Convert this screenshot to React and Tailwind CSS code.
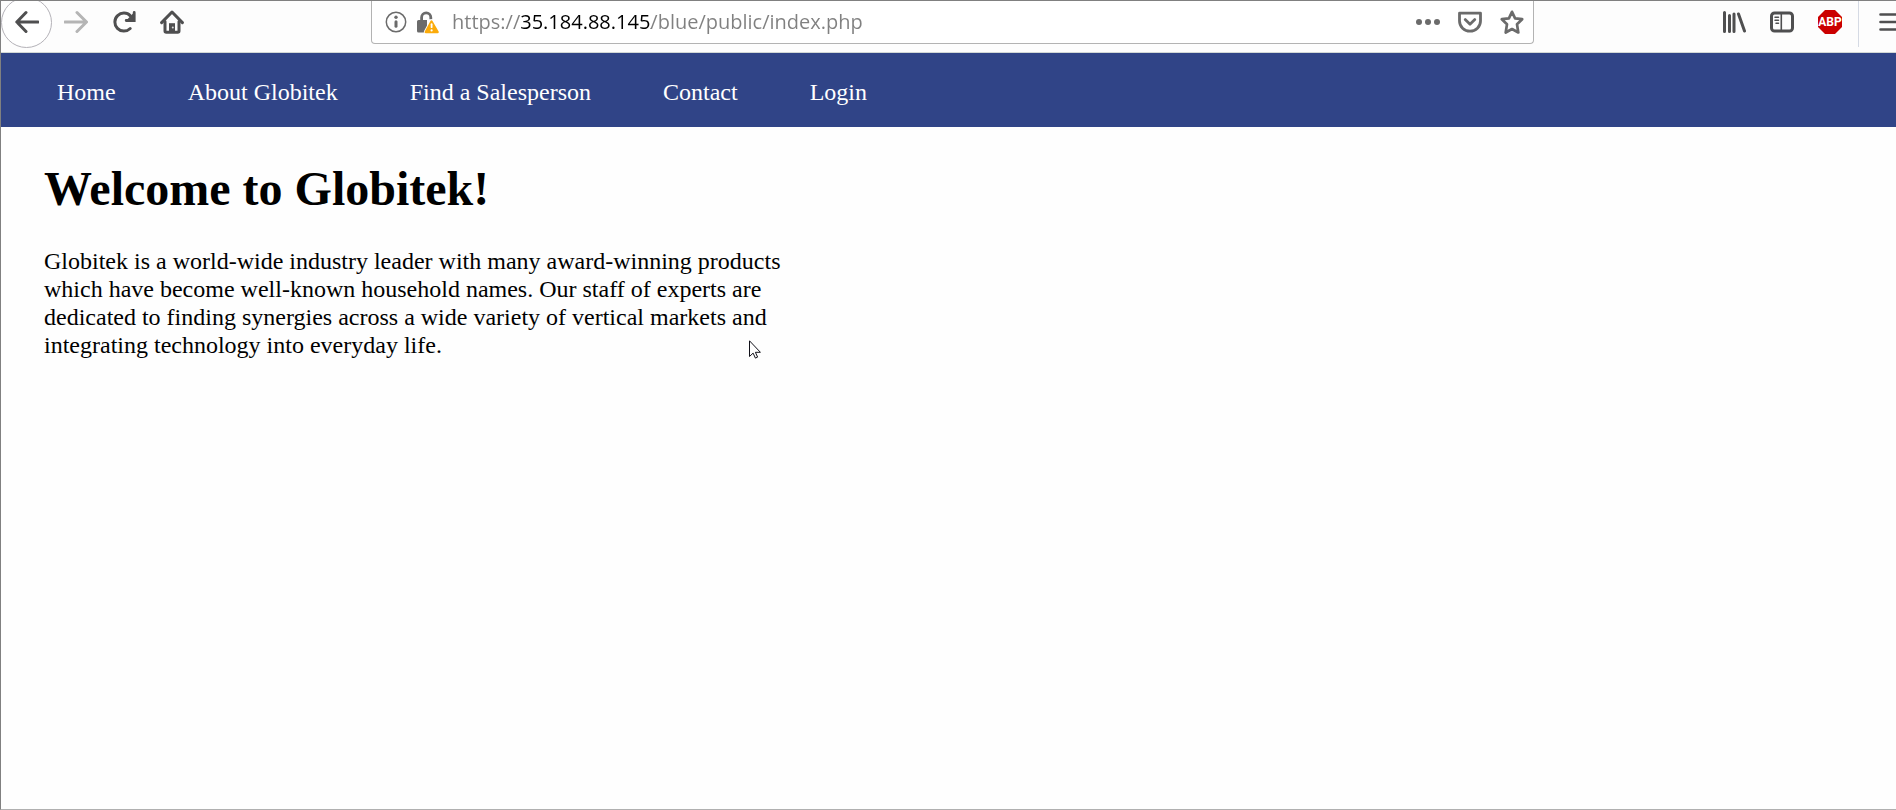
const links = ["Home", "About Globitek", "Find a Salesperson", "Contact", "Login"];

function Icon({ children, className = "" }) {
  return (
    <svg
      viewBox="0 0 24 24"
      className={`size-6 shrink-0 ${className}`}
      fill="none"
      stroke="currentColor"
      strokeWidth="3"
      strokeLinecap="round"
      strokeLinejoin="round"
      aria-hidden="true"
    >
      {children}
    </svg>
  );
}

function ToolButton({ label, className = "", children }) {
  return (
    <button
      type="button"
      aria-label={label}
      className={`flex h-10 w-12 shrink-0 items-center justify-center ${className}`}
    >
      {children}
    </button>
  );
}

function AddressBar() {
  return (
    <div className="flex h-[43px] min-w-0 flex-1 items-center self-start rounded-b border-x border-b border-[#b3b3b3] bg-white pl-3 text-[#6b6b6b]">
      <button type="button" aria-label="Site information" className="flex shrink-0">
        <Icon>
          <circle cx="12" cy="12" r="9.7" strokeWidth="1.5" />
          <circle cx="12" cy="7.2" r="1.7" fill="currentColor" stroke="none" />
          <path d="M12 11.8v4.4" strokeWidth="3" />
        </Icon>
      </button>
      <button type="button" aria-label="Connection is not secure" className="ml-2 flex shrink-0">
        <Icon>
          <path d="M5.6 11.500V7.400a4.600 4.600 0 0 1 9.200 0v1.800" strokeWidth="2.800" strokeLinecap="butt" />
          <path d="M2.500 10H11v12.400H2.500A1.500 1.500 0 0 1 1 20.900V11.500a1.500 1.500 0 0 1 1.500-1.500z" fill="currentColor" stroke="none" />
          <path d="M15.500 11.500 9.800 22h11.800z" fill="#fbab0a" stroke="#fff" strokeWidth="4" />
          <path d="M15.500 11.500 9.800 22h11.800z" fill="#fbab0a" stroke="#fbab0a" strokeWidth="2.400" />
          <path d="M15.600 14.200v3" stroke="#fff" strokeWidth="1.800" />
          <circle cx="15.600" cy="20.400" r="1.100" fill="#fff" stroke="none" />
        </Icon>
      </button>
      <input
        type="text"
        aria-label="Address"
        defaultValue="https://35.184.88.145/blue/public/index.php"
        spellCheck={false}
        className="ml-3 h-8 min-w-0 flex-1 bg-[linear-gradient(90deg,#808080_3.42em,#000_3.42em,#000_9.93em,#808080_9.93em)] bg-clip-text pb-px font-['Open_Sans','Noto_Sans',sans-serif] text-[20px] text-transparent caret-black outline-none"
      />
      <div className="flex shrink-0 gap-[18px] pr-[9px]">
        <button type="button" aria-label="Page actions" className="flex">
          <Icon>
            <g fill="currentColor" stroke="none">
              <circle cx="3" cy="12" r="3" />
              <circle cx="12" cy="12" r="3" />
              <circle cx="21" cy="12" r="3" />
            </g>
          </Icon>
        </button>
        <button type="button" aria-label="Save to Pocket" className="flex">
          <Icon>
            <path d="M1.500 3.200h21V11a10.500 10.200 0 0 1-21 0z" strokeWidth="2.800" />
            <path d="m7.200 9.600 4.800 4.600 4.800-4.600" strokeWidth="2.800" />
          </Icon>
        </button>
        <button type="button" aria-label="Bookmark this page" className="flex">
          <Icon>
            <path d="m12 1.800 3.100 6.500 7.100.9-5.200 5 1.300 8.300-6.300-3.500-6.300 3.500L7 14.200 1.800 9.200l7.100-.9z" strokeWidth="2.700" />
          </Icon>
        </button>
      </div>
    </div>
  );
}

function BrowserToolbar() {
  return (
    <div className="flex h-[52px] overflow-hidden border-b border-[#d2d8d6] bg-[#fdfdfd] text-[#4f4f50]">
      <div className="mr-[175px] flex h-[42px] shrink-0 items-center">
        <button
          type="button"
          aria-label="Back"
          className="flex size-[51px] shrink-0 items-center justify-center rounded-full border border-[#b4b2b8] bg-white"
        >
          <Icon>
            <path d="M23 12H2M11 2.500 1.800 12l9.200 9.500" />
          </Icon>
        </button>
        <ToolButton label="Forward" className="text-[#b5b5b5]">
          <Icon>
            <path d="M1 12h21M13 2.500l9.500 9.500-9.500 9.500" />
          </Icon>
        </ToolButton>
        <ToolButton label="Reload">
          <Icon>
            <path d="M18.200 18.500a9 9 0 1 1 .2-12.600" />
            <path d="M22.200 2.500v8h-8" strokeLinejoin="miter" strokeWidth="2.800" />
            <path d="m21.500 3-6.800 7h6.800z" fill="currentColor" stroke="none" />
          </Icon>
        </ToolButton>
        <ToolButton label="Home">
          <Icon>
            <path d="M1.600 12.600 12 2l10.400 10.600" />
            <path d="M5 11.500V21a1.300 1.300 0 0 0 1.300 1.300h11.400A1.300 1.300 0 0 0 19 21v-9.500" />
            <path d="M9 21.500v-8.300h6v8.300z" fill="currentColor" stroke="none" />
            <circle cx="12.800" cy="17.500" r="1" fill="#ddd" stroke="none" />
          </Icon>
        </ToolButton>
      </div>
      <AddressBar />
      <div className="-mr-[19px] ml-44 flex h-[42px] shrink-0 items-center">
        <ToolButton label="Library">
          <Icon>
            <path d="M2.500 2.500v19M7.500 5.500v16M12 4v17.500M16.500 4l6 17" />
          </Icon>
        </ToolButton>
        <ToolButton label="Sidebars">
          <Icon>
            <rect x="1.500" y="3" width="21" height="18" rx="3" />
            <path d="M11.300 3v18" strokeWidth="1.600" />
            <path d="M5 7.200h3.500M5 10.200h3.500M6 13.200h2.500" strokeWidth="1.500" />
          </Icon>
        </ToolButton>
        <ToolButton label="Adblock Plus">
          <span className="grid shrink-0 place-items-center font-['Liberation_Sans_Narrow','Roboto',sans-serif] text-[12px] leading-6 font-bold text-white">
            <Icon className="col-start-1 row-start-1">
              <path d="M7 0h10l7 7v10l-7 7H7l-7-7V7z" fill="#cb0000" stroke="none" />
            </Icon>
            <span className="col-start-1 row-start-1">ABP</span>
          </span>
        </ToolButton>
        <span className="mx-1 h-[46px] w-px shrink-0 self-start bg-[#d5dae4]" />
        <ToolButton label="Open menu" className="ml-1">
          <Icon>
            <path d="M1.500 4.500h21M1.500 12h21M1.500 19.500h21" strokeWidth="2.600" />
          </Icon>
        </ToolButton>
      </div>
    </div>
  );
}

export default function App() {
  return (
    <div className="relative min-h-screen border-t border-b border-l border-t-[#808080] border-b-[#b0b0b0] border-l-[#808080] bg-[#fefefe] font-['Liberation_Serif',serif] text-[24px] leading-7 text-black">
      <BrowserToolbar />
      <nav className="bg-[#304487] pt-[25px] pb-[21px] pl-14 text-white">
        <ul className="flex gap-[72px]">
          {links.map((label) => (
            <li key={label}>
              <a href="#">{label}</a>
            </li>
          ))}
        </ul>
      </nav>
      <main className="px-[43px] pt-[34px]">
        <h1 className="text-[48px] leading-[56px] font-bold">Welcome to Globitek!</h1>
        <p className="mt-[30px] max-w-[750px]">
          Globitek is a world-wide industry leader with many award-winning products which have
          become well-known household names. Our staff of experts are dedicated to finding
          synergies across a wide variety of vertical markets and integrating technology into
          everyday life.
        </p>
      </main>
      <svg
        viewBox="0 0 12 19"
        className="absolute top-[339px] left-[748px] h-[19px] w-3"
        fill="#fff"
        stroke="#101018"
        strokeWidth="1"
        aria-hidden="true"
      >
        <path d="M.5.8v15.700l3.600-3.400 2.300 5 2.200-1-2.200-4.800h5z" />
      </svg>
    </div>
  );
}
